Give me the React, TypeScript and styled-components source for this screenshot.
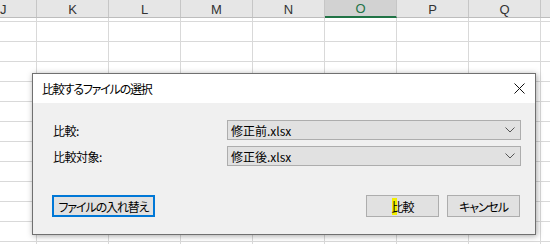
import styled, { createGlobalStyle } from "styled-components";

const GlobalStyle = createGlobalStyle`
  html, body {
    margin: 0;
    padding: 0;
    background: #ffffff;
    overflow: hidden;
  }
  * {
    box-sizing: border-box;
  }
`;

// R is only partly on screen, its letter sits past the edge
const COLUMNS = ["J", "K", "L", "M", "N", "O", "P", "Q", ""];
const SELECTED = "O";
const ROW_COUNT = 13;

const App = () => {
  return (
    <Sheet>
      <GlobalStyle />
      <HeaderRow>
        {COLUMNS.map((c, i) => (
          <HeaderCell key={i} $first={i === 0} $selected={c === SELECTED}>
            {c}
          </HeaderCell>
        ))}
      </HeaderRow>
      {Array.from({ length: ROW_COUNT }).map((_, r) => (
        <GridRow key={r} $partial={r === 0}>
          {COLUMNS.map((_c, i) => (
            <GridCell key={i} $first={i === 0} />
          ))}
        </GridRow>
      ))}

      <Dialog>
        <TitleBar>
          <Title>比較するファイルの選択</Title>
          <CloseButton>
            <svg width="11" height="11" viewBox="0 0 11 11">
              <path d="M0.5 0.5 L10.5 10.5 M10.5 0.5 L0.5 10.5" stroke="#111" strokeWidth="1" fill="none" />
            </svg>
          </CloseButton>
        </TitleBar>
        <Body>
          <Form>
            <Label>比較:</Label>
            <Select>
              <span>修正前.xlsx</span>
              <Chevron />
            </Select>
            <Label>比較対象:</Label>
            <Select>
              <span>修正後.xlsx</span>
              <Chevron />
            </Select>
          </Form>
          <Footer>
            <Button $focused>ファイルの入れ替え</Button>
            <ButtonGroup>
              <Button>
                <Cursor>比</Cursor>較
              </Button>
              <Button>キャンセル</Button>
            </ButtonGroup>
          </Footer>
        </Body>
      </Dialog>
    </Sheet>
  );
};

const Chevron = () => (
  <svg width="10" height="6" viewBox="0 0 10 6">
    <path d="M0.5 0.5 L5 5 L9.5 0.5" stroke="#555" strokeWidth="1" fill="none" />
  </svg>
);

const Sheet = styled.div`
  position: relative;
  width: 550px;
  height: 244px;
  overflow: hidden;
  font-family: "Liberation Sans", Arial, sans-serif;
`;

const HeaderRow = styled.div`
  display: flex;
  height: 18px;
  background: #e6e6e6;
  border-bottom: 1px solid #bdbdbd;
`;

const HeaderCell = styled.div<{ $first?: boolean; $selected?: boolean }>`
  flex: 0 0 ${(p) => (p.$first ? "37px" : "72px")};
  display: flex;
  align-items: center;
  justify-content: ${(p) => (p.$first ? "flex-start" : "center")};
  padding-top: 1px;
  font-size: 13px;
  color: ${(p) => (p.$selected ? "#217346" : "#333")};
  background: ${(p) => (p.$selected ? "#d2d2d2" : "transparent")};
  border-right: 1px solid #c6c6c6;
  border-bottom: ${(p) => (p.$selected ? "2px solid #217346" : "none")};
  margin-bottom: ${(p) => (p.$selected ? "-1px" : "0")};
`;

const GridRow = styled.div<{ $partial?: boolean }>`
  display: flex;
  height: ${(p) => (p.$partial ? "4px" : "20px")};
  border-bottom: 1px solid #d9d9d9;
`;

const GridCell = styled.div<{ $first?: boolean }>`
  flex: 0 0 ${(p) => (p.$first ? "37px" : "72px")};
  border-right: 1px solid #d9d9d9;
`;

const Dialog = styled.div`
  position: absolute;
  left: 32px;
  top: 73px;
  width: 504px;
  height: 162px;
  display: flex;
  flex-direction: column;
  border: 1px solid #707070;
  box-shadow: 1px 1px 6px rgba(0, 0, 0, 0.35);
  font-family: "Noto Sans CJK JP", "Liberation Sans", sans-serif;
  font-feature-settings: "palt";
  color: #000;
`;

const TitleBar = styled.div`
  height: 29px;
  flex: 0 0 29px;
  background: #ffffff;
  display: flex;
  align-items: center;
  justify-content: space-between;
  padding: 0 10px 0 9px;
`;

const Title = styled.div`
  font-size: 12px;
  letter-spacing: -1.2px;
`;

const CloseButton = styled.div`
  display: flex;
  align-items: center;
  justify-content: center;
`;

const Body = styled.div`
  flex: 1;
  background: #f0f0f0;
  display: flex;
  flex-direction: column;
  padding: 17px 14px 17px 20px;
`;

const Form = styled.div`
  display: grid;
  grid-template-columns: 174px 1fr;
  row-gap: 6px;
  align-items: center;
`;

const Label = styled.div`
  font-size: 12px;
  letter-spacing: -0.5px;
`;

const Select = styled.div`
  height: 20px;
  display: flex;
  align-items: center;
  justify-content: space-between;
  padding: 0 5px 0 3px;
  background: #e1e1e1;
  border: 1px solid #adadad;
  font-size: 12px;
`;

const Footer = styled.div`
  margin-top: auto;
  display: flex;
  justify-content: space-between;
  align-items: center;
  margin-left: -1px;
  margin-right: 1px;
`;

const ButtonGroup = styled.div`
  display: flex;
  gap: 8px;
`;

const Button = styled.div<{ $focused?: boolean }>`
  height: 22px;
  width: ${(p) => (p.$focused ? "103px" : "73px")};
  display: flex;
  align-items: center;
  justify-content: center;
  font-size: 12px;
  letter-spacing: -1.1px;
  white-space: nowrap;
  background: #e1e1e1;
  border: ${(p) => (p.$focused ? "2px solid #0078d7" : "1px solid #adadad")};
`;

const Cursor = styled.span`
  background: linear-gradient(to right, #f2ee00 50%, transparent 50%);
`;

export default App;
